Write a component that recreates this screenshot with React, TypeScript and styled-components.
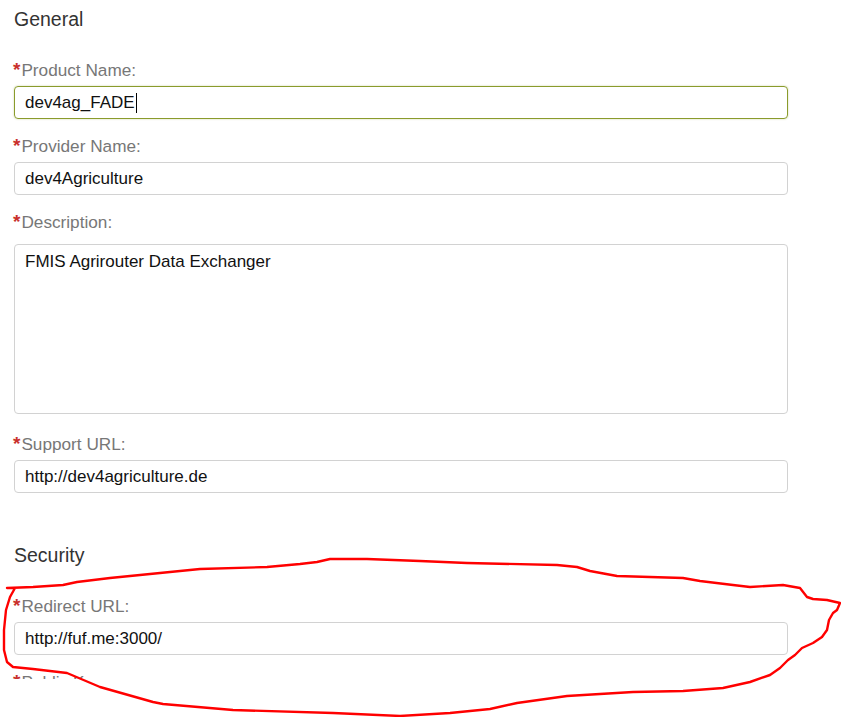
import * as React from "react"
import styled, { createGlobalStyle } from "styled-components"

const GlobalStyle = createGlobalStyle`
    html, body {
        margin: 0;
        padding: 0;
        background: #fff;
    }
    body {
        font-family: "Liberation Sans", Arial, sans-serif;
        color: #333;
    }
`

type Field = {
    label: string
    value?: string
    multiline?: boolean
    focused?: boolean
}

const generalFields: Field[] = [
    { label: "Product Name:", value: "dev4ag_FADE", focused: true },
    { label: "Provider Name:", value: "dev4Agriculture" },
    { label: "Description:", value: "FMIS Agrirouter Data Exchanger", multiline: true },
    { label: "Support URL:", value: "http://dev4agriculture.de" },
]

const securityFields: Field[] = [
    { label: "Redirect URL:", value: "http://fuf.me:3000/" },
    { label: "Public Key:", value: "" },
]

// freehand red marker loop drawn over the Security section
const scribble =
    "M7 588 L33 587 L63 585 L77 582 L110 578 L160 573 L200 569 L267 567 L300 564 L317 562 L330 559 L367 559 L420 561 L467 563 L557 565 L577 567 L590 571 L617 576 L650 577 L683 578 L700 581 L733 585 L750 587 L783 585 L800 588 L807 597 L813 599 L827 600 L840 603 L837 610 L833 613 L829 620 L827 630 L822 637 L813 643 L802 648 L795 655 L788 660 L780 668 L770 675 L750 682 L723 688 L683 691 L633 692 L567 696 L517 703 L490 709 L450 713 L400 716 L333 713 L233 710 L163 704 L153 702 L100 687 L67 673 L33 669 L13 667 L7 662 L4 650 L4 630 L6 610 L10 597 L15 588"

const FormField: React.FC<{ field: Field }> = ({ field }) => (
    <Group>
        <Label>
            <Required>*</Required>
            {field.label}
        </Label>
        {field.multiline ? (
            <TextArea>{field.value}</TextArea>
        ) : (
            <Input $focused={field.focused}>
                {field.value}
                {field.focused && <Caret />}
            </Input>
        )}
    </Group>
)

export default function App() {
    return (
        <>
            <GlobalStyle />
            <Page>
                <Viewport>
                    <Form>
                        <Section>
                            <Heading>General</Heading>
                            {generalFields.map(f => (
                                <FormField key={f.label} field={f} />
                            ))}
                        </Section>
                        <Section>
                            <Heading>Security</Heading>
                            {securityFields.map(f => (
                                <FormField key={f.label} field={f} />
                            ))}
                        </Section>
                    </Form>
                </Viewport>
                <Marker viewBox="0 0 841 717" width={841} height={717}>
                    <path
                        d={scribble}
                        fill="none"
                        stroke="#ff0000"
                        strokeWidth={2.4}
                        strokeLinejoin="round"
                        strokeLinecap="round"
                    />
                </Marker>
            </Page>
        </>
    )
}

const Page = styled.div`
    position: relative;
    width: 841px;
    height: 717px;
    overflow: hidden;
    background: #fff;
`

const Viewport = styled.div`
    height: 679px;
    overflow: hidden;
`

const Form = styled.div`
    width: 774px;
    margin-left: 14px;
    padding-top: 9px;
    display: flex;
    flex-direction: column;
    gap: 52px;
`

const Section = styled.div`
    display: flex;
    flex-direction: column;
    gap: 17px;
`

const Heading = styled.h3`
    margin: 0 0 13px;
    font-size: 19.5px;
    line-height: 21px;
    font-weight: normal;
    color: #333;
`

const Group = styled.div`
    display: flex;
    flex-direction: column;
    gap: 6px;
`

const Label = styled.div`
    display: flex;
    align-items: baseline;
    height: 20px;
    font-size: 17.2px;
    line-height: 20px;
    color: #777;
    margin-left: -1px;
`

const Required = styled.span`
    color: #c9302c;
    font-weight: bold;
    font-size: 19px;
    margin-right: 1px;
`

const Input = styled.div<{ $focused?: boolean }>`
    box-sizing: border-box;
    height: 33px;
    padding: 0 10px;
    border: 1px solid ${p => (p.$focused ? "#8a9b2c" : "#d2d2d2")};
    border-radius: 4px;
    box-shadow: ${p => (p.$focused ? "0 0 2px rgba(138, 155, 44, 0.45)" : "none")};
    font-size: 17px;
    line-height: 31px;
    color: #111;
    display: flex;
    align-items: center;
`

const Caret = styled.span`
    display: inline-block;
    width: 1px;
    height: 20px;
    margin-left: 1px;
    background: #000;
`

const TextArea = styled.div`
    box-sizing: border-box;
    height: 170px;
    margin-top: 6px;
    margin-bottom: 3px;
    padding: 7px 10px;
    border: 1px solid #d2d2d2;
    border-radius: 4px;
    font-size: 17px;
    line-height: 20px;
    color: #111;
`

const Marker = styled.svg`
    position: absolute;
    left: 0;
    top: 0;
    pointer-events: none;
`
